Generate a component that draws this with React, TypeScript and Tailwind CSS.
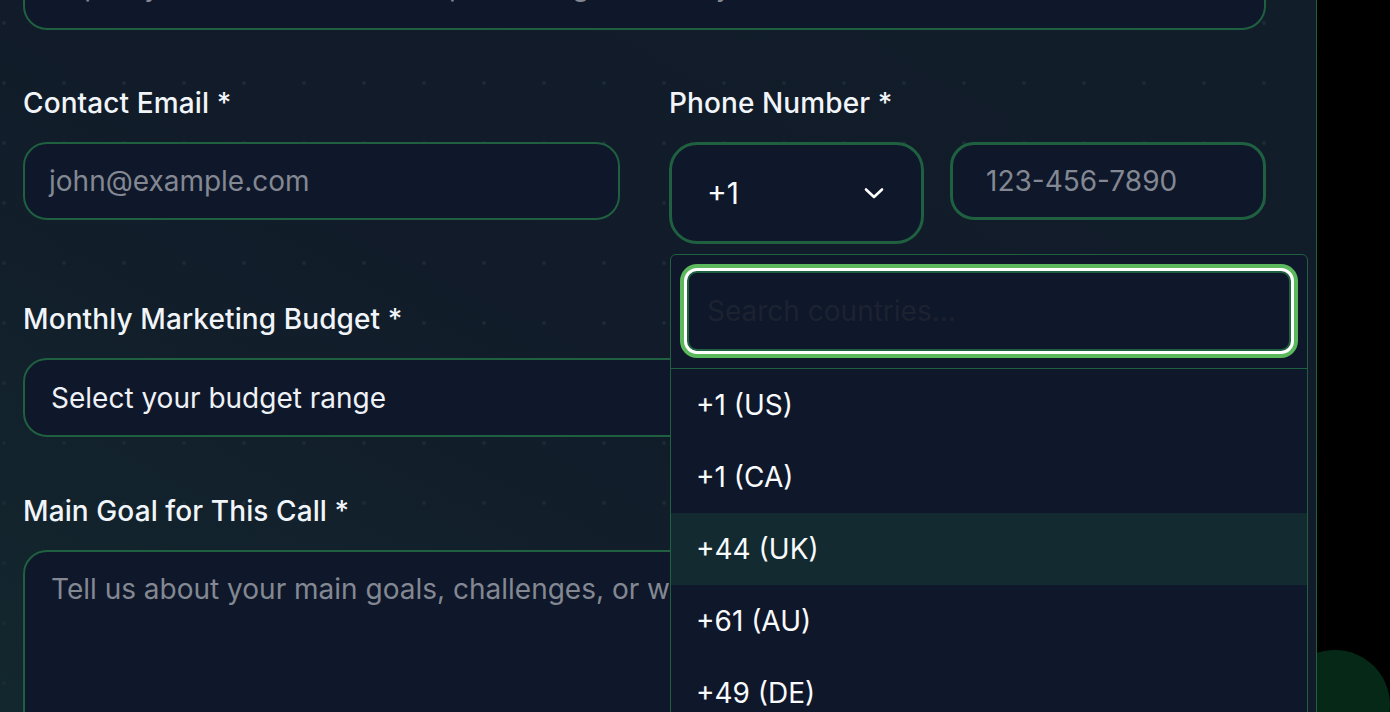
import React from "react";

const font = { fontFamily: "Inter, 'Noto Sans', sans-serif" };

function Label({ children }: { children: React.ReactNode }) {
  return (
    <div className="text-[28px] leading-[36px] font-medium text-[#f1f5f9] mb-[21px] tracking-[0.1px]">
      {children}
    </div>
  );
}

const countries = ["+1 (US)", "+1 (CA)", "+44 (UK)", "+61 (AU)", "+49 (DE)"];

export default function App() {
  return (
    <div className="w-[1390px] h-[712px] bg-black relative overflow-hidden" style={font}>
      {/* floating green blob bottom-right */}
      <div className="absolute left-[1280px] top-[650px] w-[110px] h-[110px] rounded-full bg-[#052817]" />
      <div className="relative z-10 w-[1317px] h-[712px] border-r border-[#1f6040] bg-gradient-to-tr from-[#13272e] via-[#111b29] to-[#121d2a] overflow-hidden">
        <div className="absolute inset-0 bg-[radial-gradient(circle,#1b2b35_1.5px,transparent_2.2px)] bg-[size:60px_60px] bg-[position:-26px_-7px] pointer-events-none" />
        <div className="relative pl-[23px] pr-[50px]">
          {/* top input (cut off) */}
          <div className="mt-[-48px] h-[78px] rounded-[24px] border-2 border-[#1f6040] bg-[#0f172a] flex items-center px-[25px] pb-[10px] text-[28px] text-[#838892] whitespace-nowrap overflow-hidden">
            https://yourwebsite.com or https://instagram.com/yourhandle
          </div>

          {/* row: email + phone */}
          <div className="mt-[55px] grid grid-cols-2 gap-x-[49px]">
            <div>
              <Label>Contact Email *</Label>
              <div className="h-[78px] mt-[1px] rounded-[24px] border-2 border-[#1f6040] bg-[#0f172a] flex items-center px-[24px] text-[28px] text-[#838892]">
                john@example.com
              </div>
            </div>
            <div>
              <Label>Phone Number *</Label>
              <div className="relative mt-[1px] flex gap-[26px] items-start">
                <div className="w-[255px] h-[102px] rounded-[28px] border-[3px] border-[#1f6040] bg-[#0f172a] flex items-center justify-between pl-[35px] pr-[36px] text-[30px] text-[#f8fafc]">
                  <span>+1</span>
                  <svg width="22" height="14" viewBox="0 0 22 14" fill="none">
                    <path d="M3 3.5 L11 11 L19 3.5" stroke="#ffffff" strokeWidth="2.6" strokeLinecap="round" strokeLinejoin="round" />
                  </svg>
                </div>
                <div className="flex-1 h-[78px] rounded-[24px] border-[3px] border-[#1f6040] bg-[#0f172a] flex items-center px-[33px] text-[28px] text-[#838892]">
                  123-456-7890
                </div>

                {/* dropdown */}
                <div className="absolute left-[1px] top-[112px] w-[638px] h-[500px] border border-[#1f6040] rounded-t-[6px] bg-[#0f172a] z-20">
                  <div className="p-[16px] pb-[17px] border-b border-[#1f6040]">
                    <div className="h-[80px] rounded-[10px] border-2 border-[#1f6040] bg-[#0f172a] ring-[4px] ring-[#5cb85c] ring-offset-[3px] ring-offset-white flex items-center px-[18px] text-[28px] text-[#1d2230]">
                      Search countries...
                    </div>
                  </div>
                  <div>
                    {countries.map((c) => (
                      <div
                        key={c}
                        className={
                          "h-[72px] flex items-center px-[25px] text-[28px] text-[#f8fafc] " +
                          (c === "+44 (UK)" ? "bg-[#122a30]" : "")
                        }
                      >
                        {c}
                      </div>
                    ))}
                  </div>
                </div>
              </div>
            </div>
          </div>

          {/* budget */}
          <div className="mt-[57px]">
            <Label>Monthly Marketing Budget *</Label>
            <div className="h-[79px] rounded-[24px] border-2 border-[#1f6040] bg-[#0f172a] flex items-center px-[26px] text-[28px] text-[#eef1f5]">
              Select your budget range
            </div>
          </div>

          {/* goal */}
          <div className="mt-[56px]">
            <Label>Main Goal for This Call *</Label>
            <div className="h-[200px] rounded-[24px] border-2 border-[#1f6040] bg-[#0f172a] px-[26px] pt-[19px] text-[28px] leading-[36px] text-[#838892] whitespace-nowrap overflow-hidden">
              Tell us about your main goals, challenges, or what you'd like to achieve...
            </div>
          </div>
        </div>
      </div>
    </div>
  );
}
